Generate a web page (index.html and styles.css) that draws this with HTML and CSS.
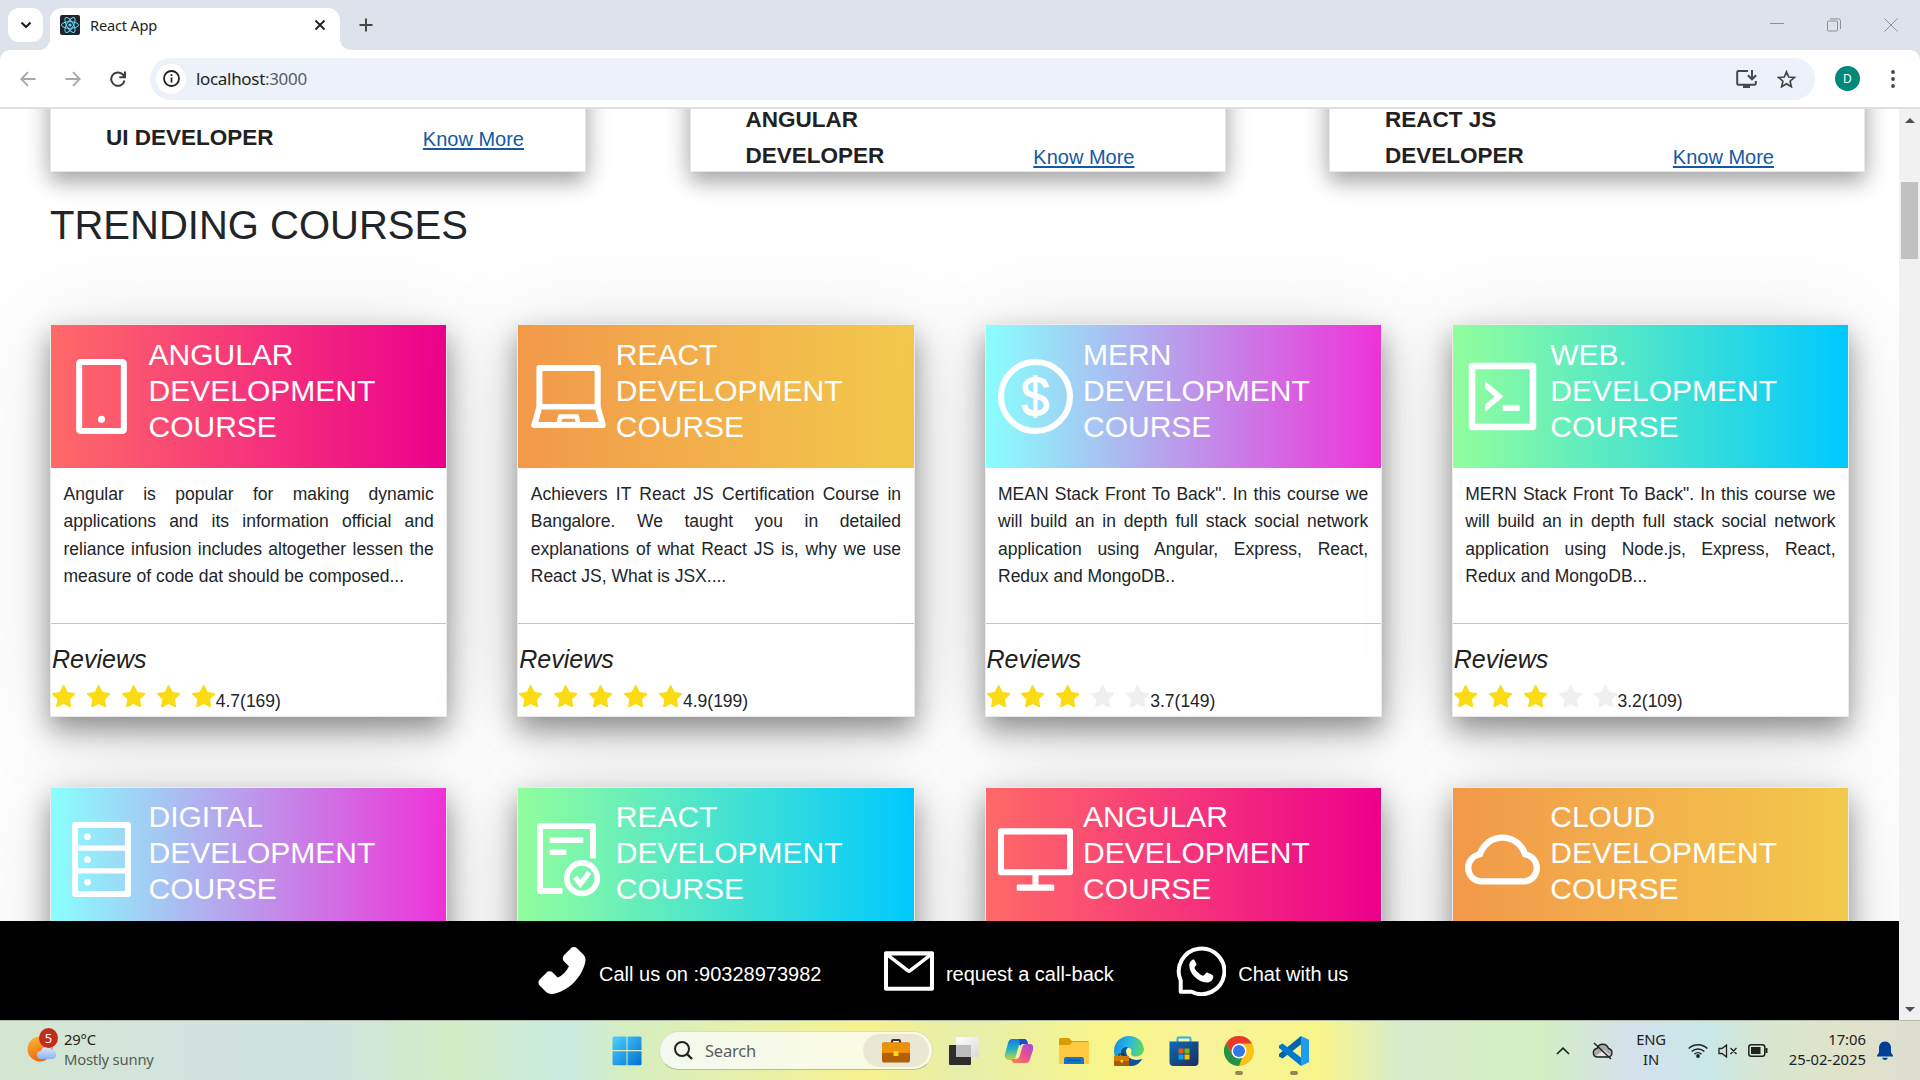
FILE: index.html
```
<!DOCTYPE html>
<html lang="en">
<head>
<meta charset="utf-8">
<title>React App</title>
<link rel="stylesheet" href="styles.css">
</head>
<body>
<svg class="defs" width="0" height="0" aria-hidden="true">
  <symbol id="star" viewBox="88 68 848 810"><path d="M908.1 353.1l-253.9-36.9L540.7 86.1c-3.1-6.3-8.2-11.4-14.5-14.5-15.8-7.8-35-1.3-42.9 14.5L369.8 316.2l-253.9 36.9c-7 1-13.4 4.3-18.3 9.3a32.05 32.05 0 00.6 45.3l183.7 179.1-43.4 252.9a31.95 31.95 0 0046.4 33.7L512 754l227.1 119.4c6.2 3.3 13.4 4.4 20.3 3.2 17.4-3 29.1-19.5 26.1-36.9l-43.4-252.9 183.7-179.1c5-4.9 8.3-11.3 9.3-18.3 2.7-17.5-9.5-33.7-27-36.3z"/></symbol>
</svg>

<header class="chrome">
  <div class="tabstrip">
    <button class="tab-search"><svg width="12" height="8" viewBox="0 0 12 8"><path d="M1.5 1.5L6 6l4.500-4.500" fill="none" stroke="#1f1f1f" stroke-width="2.200"/></svg></button>
    <div class="tab">
      <svg class="favicon" width="20" height="20" viewBox="0 0 20 20"><rect width="20" height="20" rx="2" fill="#20232a"/><g fill="none" stroke="#61dafb" stroke-width="1"><ellipse cx="10" cy="10" rx="8.500" ry="3.300"/><ellipse cx="10" cy="10" rx="8.500" ry="3.300" transform="rotate(60 10 10)"/><ellipse cx="10" cy="10" rx="8.500" ry="3.300" transform="rotate(120 10 10)"/></g><circle cx="10" cy="10" r="1.600" fill="#61dafb"/></svg>
      <span class="tab-title">React App</span>
      <svg class="tab-close" width="12" height="12" viewBox="0 0 12 12"><path d="M1.500 1.500l9 9M10.500 1.500l-9 9" stroke="#1f1f1f" stroke-width="1.800"/></svg>
    </div>
    <svg class="new-tab" width="14" height="14" viewBox="0 0 14 14"><path d="M7 .5v13M.5 7h13" stroke="#474747" stroke-width="2"/></svg>
    <div class="window-buttons">
      <svg width="14" height="14" viewBox="0 0 14 14"><path d="M0 5.500h14" stroke="#8d9096"/></svg>
      <svg width="14" height="14" viewBox="0 0 14 14"><g fill="none" stroke="#8d9096"><rect x=".5" y="3" width="10" height="10" rx="1"/><path d="M3 .9h8.500a2 2 0 012 2V11"/></g></svg>
      <svg width="14" height="14" viewBox="0 0 14 14"><path d="M.5.5l13 13M13.500.5l-13 13" stroke="#8d9096"/></svg>
    </div>
  </div>
  <div class="toolbar">
    <svg width="16" height="16" viewBox="0 0 16 16" fill="none" stroke="#a9a9a9" stroke-width="1.900"><path d="M15.500 8H1.500M8 1.200L1.300 8 8 14.800"/></svg>
    <svg width="16" height="16" viewBox="0 0 16 16" fill="none" stroke="#a9a9a9" stroke-width="1.900"><path d="M.5 8h14M8 1.200L14.700 8 8 14.800"/></svg>
    <svg width="16" height="16" viewBox="0 0 16 16" fill="none" stroke="#3c3c3c" stroke-width="2"><path d="M14.500 9.500A6.700 6.700 0 1112.600 3.300L14.800 5.500M15 .5v5.700H9.300"/></svg>
    <div class="omnibox">
      <span class="site-info"><svg width="17" height="17" viewBox="0 0 17 17"><circle cx="8.500" cy="8.500" r="7.500" fill="none" stroke="#1f1f1f" stroke-width="1.800"/><path d="M8.500 7.500v5M8.500 4.300v1.800" stroke="#1f1f1f" stroke-width="1.700"/></svg></span>
      <span class="url">localhost<span class="port">:3000</span></span>
      <svg width="21" height="18" viewBox="0 0 21 18" fill="none" stroke="#474747" stroke-width="2"><path d="M12 1H2.500Q1.200 1 1.200 2.300v11.200q0 1.300 1.300 1.300h16q1.300 0 1.300-1.300V11M16 0v9M11.800 5.300L16 9.300l4.200-4"/><path d="M7 16.500h7" stroke-width="3"/></svg>
      <svg width="19" height="18" viewBox="0 0 19 18"><path d="M9.500 1.800l2.200 5.200 5.700.5-4.300 3.700 1.300 5.600-4.900-3-4.900 3 1.300-5.600L1.600 7.500l5.700-.5z" fill="none" stroke="#474747" stroke-width="1.700"/></svg>
    </div>
    <span class="avatar">D</span>
    <svg width="4" height="18" viewBox="0 0 4 18" fill="#474747"><circle cx="2" cy="2" r="1.900"/><circle cx="2" cy="9" r="1.900"/><circle cx="2" cy="16" r="1.900"/></svg>
  </div>
</header>

<div class="viewport">
  <main class="page">
    <section class="careers">
      <article class="career"><h3>UI DEVELOPER</h3><a class="know-more" href="#">Know More</a></article>
      <article class="career"><h3>ANGULAR<br>DEVELOPER</h3><a class="know-more" href="#">Know More</a></article>
      <article class="career"><h3>REACT JS<br>DEVELOPER</h3><a class="know-more" href="#">Know More</a></article>
    </section>
    <h2 class="section-title">TRENDING COURSES</h2>
    <section class="courses">
      <article class="course">
        <div class="banner rose"><svg class="icon" viewBox="64 64 896 896"><rect x="245" y="100" width="534" height="824" rx="16" fill="none" stroke="#fff" stroke-width="72"/><circle cx="512" cy="785" r="42"/></svg><h3>ANGULAR DEVELOPMENT COURSE</h3></div>
        <p>Angular is popular for making dynamic applications and its information official and reliance infusion includes altogether lessen the measure of code dat should be composed...</p>
        <footer><h4>Reviews</h4><div class="rating"><svg><use href="#star"/></svg><svg><use href="#star"/></svg><svg><use href="#star"/></svg><svg><use href="#star"/></svg><svg><use href="#star"/></svg><span>4.7(169)</span></div></footer>
      </article>
      <article class="course">
        <div class="banner amber"><svg class="icon" viewBox="64 64 896 896"><path d="M956.9 845.1L896.4 632V168c0-17.700-14.300-32-32-32h-704c-17.700 0-32 14.300-32 32v464L67.900 845.100C60.400 866 75.800 888 98 888h828.800c22.200 0 37.600-22 30.100-42.900zM200.400 208h624v395h-624V208zm228.300 608l8.100-37h150.300l8.100 37H428.700zm224 0l-19.100-86.700c-.8-3.700-4.100-6.300-7.800-6.300H398.200c-3.800 0-7 2.600-7.800 6.300L371.300 816H151l42.300-149h638.200l42.300 149H652.700z"/></svg><h3>REACT DEVELOPMENT COURSE</h3></div>
        <p>Achievers IT React JS Certification Course in Bangalore. We taught you in detailed explanations of what React JS is, why we use React JS, What is JSX....</p>
        <footer><h4>Reviews</h4><div class="rating"><svg><use href="#star"/></svg><svg><use href="#star"/></svg><svg><use href="#star"/></svg><svg><use href="#star"/></svg><svg><use href="#star"/></svg><span>4.9(199)</span></div></footer>
      </article>
      <article class="course">
        <div class="banner violet"><svg class="icon" viewBox="64 64 896 896"><g fill="none" stroke="#fff"><circle cx="512" cy="512" r="412" stroke-width="72"/><path d="M640 402C633 345 590 310 512 310C436 310 388 350 388 405C388 470 445 490 512 506C590 523 644 550 644 613C644 680 588 713 512 713C430 713 386 674 380 612" stroke-width="66"/><path d="M512 255v512" stroke-width="50"/></g></svg><h3>MERN DEVELOPMENT COURSE</h3></div>
        <p>MEAN Stack Front To Back". In this course we will build an in depth full stack social network application using Angular, Express, React, Redux and MongoDB..</p>
        <footer><h4>Reviews</h4><div class="rating"><svg><use href="#star"/></svg><svg><use href="#star"/></svg><svg><use href="#star"/></svg><svg class="off"><use href="#star"/></svg><svg class="off"><use href="#star"/></svg><span>3.7(149)</span></div></footer>
      </article>
      <article class="course">
        <div class="banner mint"><svg class="icon" viewBox="64 64 896 896"><path d="M516 673c0 4.400 3.400 8 7.500 8h185c4.100 0 7.500-3.600 7.500-8v-48c0-4.400-3.400-8-7.500-8h-185c-4.100 0-7.500 3.600-7.500 8v48zm-194.900 6.100l192-161c3.800-3.200 3.800-9.100 0-12.300l-192-160.900A7.950 7.950 0 00308 351v62.700c0 2.400 1 4.600 2.900 6.100L420.700 512l-109.800 92.200a8.100 8.100 0 00-2.900 6.100V673c0 6.800 7.900 10.500 13.100 6.100zM880 112H144c-17.700 0-32 14.300-32 32v736c0 17.700 14.300 32 32 32h736c17.700 0 32-14.300 32-32V144c0-17.700-14.300-32-32-32zm-40 728H184V184h656v656z" stroke="#fff" stroke-width="6"/></svg><h3>WEB. DEVELOPMENT COURSE</h3></div>
        <p>MERN Stack Front To Back". In this course we will build an in depth full stack social network application using Node.js, Express, React, Redux and MongoDB...</p>
        <footer><h4>Reviews</h4><div class="rating"><svg><use href="#star"/></svg><svg><use href="#star"/></svg><svg><use href="#star"/></svg><svg class="off"><use href="#star"/></svg><svg class="off"><use href="#star"/></svg><span>3.2(109)</span></div></footer>
      </article>
      <article class="course">
        <div class="banner violet"><svg class="icon" viewBox="64 64 896 896"><path d="M832 64H192c-17.700 0-32 14.300-32 32v832c0 17.700 14.300 32 32 32h640c17.700 0 32-14.300 32-32V96c0-17.700-14.300-32-32-32zm-600 72h560v208H232V136zm560 480H232V408h560v208zm0 272H232V680h560v208zM304 240a40 40 0 1080 0 40 40 0 10-80 0zm0 272a40 40 0 1080 0 40 40 0 10-80 0zm0 272a40 40 0 1080 0 40 40 0 10-80 0z"/></svg><h3>DIGITAL DEVELOPMENT COURSE</h3></div>
      </article>
      <article class="course">
        <div class="banner mint"><svg class="icon" viewBox="64 64 896 896"><path d="M296 250c-4.400 0-8 3.600-8 8v48c0 4.400 3.600 8 8 8h384c4.400 0 8-3.600 8-8v-48c0-4.400-3.600-8-8-8H296zm184 144H296c-4.400 0-8 3.600-8 8v48c0 4.400 3.600 8 8 8h184c4.400 0 8-3.600 8-8v-48c0-4.400-3.600-8-8-8zm-48 458H208V148h560v344c0 4.400 3.600 8 8 8h56c4.400 0 8-3.600 8-8V108c0-17.700-14.300-32-32-32H168c-17.700 0-32 14.300-32 32v784c0 17.700 14.300 32 32 32h264c4.400 0 8-3.600 8-8v-56c0-4.400-3.600-8-8-8z"/><g fill="none" stroke="#fff"><circle cx="674" cy="735" r="182" stroke-width="68"/><path d="M592 722l62 82 106-140" stroke-width="62"/></g></svg><h3>REACT DEVELOPMENT COURSE</h3></div>
      </article>
      <article class="course">
        <div class="banner rose"><svg class="icon" viewBox="64 64 896 896"><path d="M928 140H96c-17.700 0-32 14.300-32 32v496c0 17.700 14.300 32 32 32h380v112H304c-8.800 0-16 7.200-16 16v48c0 4.400 3.600 8 8 8h432c4.400 0 8-3.600 8-8v-48c0-8.800-7.200-16-16-16H548V700h380c17.700 0 32-14.300 32-32V172c0-17.700-14.300-32-32-32zm-40 488H136V212h752v416z"/></svg><h3>ANGULAR DEVELOPMENT COURSE</h3></div>
      </article>
      <article class="course">
        <div class="banner amber"><svg class="icon" viewBox="64 64 896 896"><path d="M811.400 418.700C765.600 297.900 648.900 212 512.200 212S258.800 297.800 213 418.600C127.300 441.100 64 519.100 64 612c0 110.500 89.500 200 199.900 200h496.200C870.500 812 960 722.500 960 612c0-92.700-63.100-170.700-148.600-193.300zm36.300 281a123.070 123.070 0 01-87.600 36.300H263.900c-33.100 0-64.200-12.900-87.600-36.300A123.300 123.300 0 01140 612c0-28 9.100-54.300 26.200-76.300a125.700 125.700 0 0166.100-43.700l37.900-9.900 13.900-36.600c8.600-22.800 20.600-44.100 35.700-63.400a245.600 245.600 0 0152.400-49.900c41.100-28.900 89.500-44.200 140-44.200s98.900 15.300 140 44.200c19.900 14 37.500 30.800 52.400 49.900 15.100 19.300 27.100 40.700 35.700 63.400l13.800 36.500 37.800 10c54.300 14.500 92.100 63.800 92.100 120 0 33.100-12.900 64.300-36.300 87.700z"/></svg><h3>CLOUD DEVELOPMENT COURSE</h3></div>
      </article>
    </section>
    <div class="contact-bar">
      <div class="contact"><svg width="50" height="50" viewBox="74 82 876 876"><path d="M885.600 230.200L779.100 123.800a80.830 80.830 0 00-57.300-23.800c-21.700 0-42.100 8.500-57.400 23.800L549.800 238.400a80.830 80.830 0 00-23.800 57.300c0 21.700 8.500 42.100 23.800 57.400l83.800 83.800A393.820 393.820 0 01553.100 553 395.340 395.340 0 01437 633.800L353.200 550a80.830 80.830 0 00-57.300-23.800c-21.700 0-42.100 8.500-57.400 23.800L123.800 664.500a80.890 80.890 0 00-23.800 57.400c0 21.700 8.500 42.100 23.800 57.400l106.300 106.300c24.400 24.500 58.100 38.400 92.700 38.400 7.300 0 14.300-.6 21.200-1.800 134.800-22.200 268.500-93.900 376.400-201.700C828.200 612.800 899.800 479.200 922.300 344c6.800-41.300-6.900-83.800-36.700-113.800z"/></svg><span>Call us on :90328973982</span></div>
      <div class="contact"><svg width="50" height="50" viewBox="64 64 896 896"><path d="M928 160H96c-17.700 0-32 14.300-32 32v640c0 17.700 14.300 32 32 32h832c17.700 0 32-14.300 32-32V192c0-17.700-14.300-32-32-32zm-40 110.800V792H136V270.800l-27.600-21.500 39.300-50.500 42.800 33.300h643.100l42.800-33.300 39.300 50.500-27.700 21.500zM833.600 232L512 482 190.400 232l-42.800-33.300-39.300 50.500 27.600 21.500 341.600 265.600a55.990 55.990 0 0068.700 0L888 270.800l27.600-21.500-39.300-50.500-42.700 33.200z"/></svg><span>request a call-back</span></div>
      <div class="contact"><svg width="50" height="50" viewBox="0 0 50 50"><path d="M4.700 34.500A22.800 22.800 0 1115.500 45.800H4.700z" fill="none" stroke="#fff" stroke-width="4" stroke-linejoin="round"/><path d="M17.600 13.400c-1 0-4.300 1.700-4.300 6 0 8.500 9 16.600 17.300 17.100 3.500.2 6.600-2.300 6.700-5.800 0-1.200-.2-1.600-6-4.200-1.500-.6-2.600 2.600-3.900 3.200-1.500.4-8.600-5.300-8.900-8 .1-1.300 2.300-2.200 2-3.500l-2.100-4.200c-.3-.6-.4-.6-.8-.6z"/></svg><span>Chat with us</span></div>
    </div>
  </main>
  <div class="scrollbar"><i class="arrow up"></i><i class="thumb"></i><i class="arrow down"></i></div>
</div>

<div class="taskbar">
  <div class="weather">
    <div class="weather-icon"><svg width="30" height="34" viewBox="0 0 30 34"><defs><linearGradient id="sun" x2="0.300" y2="1"><stop stop-color="#fbb830"/><stop offset="1" stop-color="#ee6a17"/></linearGradient><linearGradient id="cl" x2="0" y2="1"><stop stop-color="#dce9ff"/><stop offset="1" stop-color="#8fb2ee"/></linearGradient></defs><circle cx="13" cy="16" r="12.500" fill="url(#sun)"/><path d="M14 26a4 4 0 010-8 6 6 0 0111-1 4.600 4.600 0 011 9z" fill="url(#cl)"/></svg><span class="badge">5</span></div>
    <div class="weather-text"><span>29°C</span><span class="dim">Mostly sunny</span></div>
  </div>
  <div class="apps">
    <svg width="30" height="30" viewBox="0 0 30 30"><defs><linearGradient id="win" x2="1" y2="1"><stop stop-color="#4fd0ff"/><stop offset="1" stop-color="#0070d0"/></linearGradient></defs><path d="M2 .5h12.500V14H.5V2A1.500 1.500 0 012 .5zM15.500.5H28A1.500 1.500 0 0129.500 2v12h-14zM.5 15.300h14v14H2a1.500 1.500 0 01-1.500-1.500zM15.500 15.300h14v12.500a1.500 1.500 0 01-1.500 1.500H15.500z" fill="url(#win)"/></svg>
    <div class="search"><svg width="19" height="19" viewBox="0 0 19 19"><circle cx="8" cy="8" r="7" fill="none" stroke="#222" stroke-width="2"/><path d="M13 13l5 5" stroke="#222" stroke-width="2.400"/></svg><span>Search</span><b class="search-art"><svg width="28" height="24" viewBox="0 0 28 24"><path d="M10 4V2q0-1 1-1h6q1 0 1 1v2" fill="none" stroke="#333" stroke-width="2"/><rect y="3.500" width="28" height="20" rx="2" fill="#b05f05"/><path d="M0 5.500a2 2 0 012-2h24a2 2 0 012 2V14H0z" fill="#ec9108"/><rect x="11.500" y="12" width="5" height="5" fill="#ffd21c"/></svg></b></div>
    <svg width="30" height="30" viewBox="0 0 30 30"><defs><linearGradient id="tv" x2="1" y2="1"><stop stop-color="#fff"/><stop offset="1" stop-color="#d9d9d9"/></linearGradient></defs><rect y="9" width="22" height="20" rx="1" fill="#2d2d2d"/><rect x="7" y="1" width="22.500" height="20" rx="1" fill="url(#tv)"/><path d="M7 9h15v12H7z" fill="#bcbcbc"/></svg>
    <svg width="30" height="30" viewBox="0 0 30 30"><defs><linearGradient id="cp1" x2="0" y2="1"><stop stop-color="#1679e0"/><stop offset=".5" stop-color="#27b2c3"/><stop offset="1" stop-color="#c8d838"/></linearGradient><linearGradient id="cp2" x1="1" x2="0" y2="1"><stop stop-color="#9a4be8"/><stop offset=".5" stop-color="#ec4f90"/><stop offset="1" stop-color="#fb8b4a"/></linearGradient></defs><path d="M8 3h12q3 0 4 5l-6 0q-3 0-4 4l-2 8q-1 4-4 4H5q-5 0-4-6L4 7q1-4 4-4z" fill="url(#cp1)"/><path d="M22 27H11q-3 0-4-4h5q3 0 4-4l2-7q1-4 4-4h4q4 0 3 6l-3 9q-1 4-4 4z" fill="url(#cp2)"/><path d="M15 3h5q3 0 4 5h-5q-2 0-3 2z" fill="#1a4fc4"/></svg>
    <svg width="30" height="30" viewBox="0 0 30 30"><path d="M0 3.500Q0 2 1.500 2H10l3 3h15.500Q30 5 30 6.500V12H0z" fill="#dc9b05"/><path d="M0 9h11l2.500-3H30v20.500q0 1.500-1.500 1.500h-27Q0 28 0 26.500z" fill="#ffca40"/><path d="M5 28v-5q0-2 2-2h16q2 0 2 2v5z" fill="#0d78cf"/><path d="M8.500 24.500h13" stroke="#07509a" stroke-width="1.400"/></svg>
    <svg width="30" height="30" viewBox="0 0 30 30"><defs><linearGradient id="ed" x2="1" y2=".3"><stop stop-color="#1187df"/><stop offset=".55" stop-color="#2bb9dc"/><stop offset="1" stop-color="#5dd961"/></linearGradient></defs><path d="M15 0C6 0 0 7 0 15c0 8 6 15 14 15 6 0 10-2 13-7-7 3-15-1-15-8 0-2 1-3 3-3 2 0 3 2 2 6 1 3 5 3 8 2 3-1 5-4 5-7C29 5 23 0 15 0z" fill="url(#ed)"/><path d="M7 16c0 8 5 14 11 14 4 0 8-3 10-7-8 3-16-1-16-8 0-2 1-3 2-4-4 0-7 2-7 5z" fill="#124f9d"/><rect y="20" width="15" height="10" rx="1" fill="#a85b08"/><path d="M0 20h15v5H0z" fill="#d37b0a"/><path d="M5 20v-2h5v2" fill="none" stroke="#412300"/><rect x="6.500" y="24" width="2.500" height="2.500" fill="#ffd21c"/></svg>
    <svg width="30" height="30" viewBox="0 0 30 30"><defs><linearGradient id="st" x2="1" y2="1"><stop stop-color="#096bb8"/><stop offset="1" stop-color="#1f2c5b"/></linearGradient></defs><path d="M8.500 6V2.500Q8.500 1.500 9.500 1.500h11q1 0 1 1V6" fill="none" stroke="#28b2ee" stroke-width="2"/><path d="M.5 5.500h29V26q0 4-4 4h-21q-4 0-4-4z" fill="url(#st)"/><path d="M9.500 12.500h5v5h-5z" fill="#f25022"/><path d="M15.500 12.500h5v5h-5z" fill="#7fba00"/><path d="M9.500 18.500h5v5h-5z" fill="#00a4ef"/><path d="M15.500 18.500h5v5h-5z" fill="#ffb900"/></svg>
    <span class="app running"><svg width="30" height="30" viewBox="0 0 30 30"><circle cx="15" cy="15" r="15" fill="#fbc116"/><path d="M2 7.500L8.500 18.700 15 22l3 0L15 30A15 15 0 012 7.500z" fill="#229342"/><path d="M15 7.500h13A15 15 0 002 7.500l6.500 11.200z" fill="#e33b2e"/><circle cx="15" cy="15" r="7.500" fill="#fff"/><circle cx="15" cy="15" r="6" fill="#2f78ea"/></svg></span>
    <span class="app running"><svg width="30" height="30" viewBox="0 0 30 30"><path d="M22 8.500L3.500 22.500 0 20.500V18L22 0z" fill="#0065a9"/><path d="M22 21.500L3.500 7.500 0 9.500V12L22 30z" fill="#007acc"/><path d="M22 0l8 3.700v22.600L22 30z" fill="#1f9cf0"/></svg></span>
  </div>
  <div class="tray">
    <svg class="t-up" width="14" height="8" viewBox="0 0 14 8"><path d="M1 7l6-5.800L13 7" fill="none" stroke="#222" stroke-width="1.600"/></svg>
    <svg class="t-cloud" width="21" height="18" viewBox="0 0 21 18"><path d="M5 15a4.300 4.300 0 010-8.500 6 6 0 0111.500 0A4.300 4.300 0 0116 15z" fill="#aaa" stroke="#222" stroke-width="1.400"/><path d="M4 14l8-6 6 5-2 1z" fill="#e6e6e6"/><path d="M2 1l17 16" stroke="#222" stroke-width="1.500"/></svg>
    <div class="t-lang"><span>ENG</span><span>IN</span></div>
    <svg class="t-wifi" width="20" height="15" viewBox="0 0 20 15"><g fill="none" stroke="#222" stroke-width="1.500"><path d="M.7 5.600a13 13 0 0118.600 0M3.700 8.500a9 9 0 0112.600 0M6.500 11.200a5 5 0 017 0"/></g><circle cx="10" cy="13" r="1.900" fill="#222"/></svg>
    <svg class="t-vol" width="20" height="14" viewBox="0 0 20 14" fill="none" stroke="#222" stroke-width="1.300"><path d="M1 4.500h3L8.500 1v12L4 9.500H1zM12.500 4l6 6M18.500 4l-6 6"/></svg>
    <svg class="t-bat" width="20" height="13" viewBox="0 0 20 13"><rect x=".8" y=".8" width="16" height="11.400" rx="2.500" fill="none" stroke="#222" stroke-width="1.500"/><rect x="3" y="3" width="9.500" height="7" fill="#222"/><path d="M18.500 4v5" stroke="#222" stroke-width="2"/></svg>
    <div class="t-clock"><span>17:06</span><span>25-02-2025</span></div>
    <svg class="t-bell" width="16" height="19" viewBox="0 0 16 19"><path d="M8 .5c4 0 6 3 6 6.500v4.500l2 3v1H0v-1l2-3V7C2 3.500 4 .5 8 .5zM5 16.700h6q-1 2.200-3 2.200t-3-2.200z" fill="#003f96"/></svg>
  </div>
</div>
</body>
</html>
```
FILE: styles.css
```
* { box-sizing: border-box; }
body {
  margin: 0;
  width: 1920px;
  height: 1080px;
  overflow: hidden;
  display: flex;
  flex-direction: column;
  background: #fff;
  color: #212529;
  font-family: "Liberation Sans", Arial, sans-serif;
}
h2, h3, h4, p { margin: 0; font-weight: 400; }
svg { flex: none; display: block; }
.defs { position: absolute; }

/* Browser chrome */
.chrome {
  position: relative;
  z-index: 2;
  flex: none;
  height: 109px;
  background: #dee2ea;
  font-family: "Noto Sans", "Open Sans", sans-serif;
}
.tabstrip { display: flex; align-items: center; height: 50px; padding: 0 22px 0 8px; }
.tab-search {
  display: flex; align-items: center; justify-content: center;
  width: 35px; height: 34px; padding: 0; border: 0; border-radius: 11px; background: #fff;
}
.tab {
  position: relative;
  display: flex; align-items: center;
  align-self: flex-end;
  width: 290px; height: 42px; margin-left: 7px; padding: 0 14px 8px 10px;
  background: #fff; border-radius: 12px 12px 0 0;
}
.tab::before, .tab::after {
  content: ""; position: absolute; bottom: 0; width: 12px; height: 12px;
}
.tab::before { left: -12px; background: radial-gradient(circle at 0 0, transparent 12px, #fff 12.500px); }
.tab::after { right: -12px; background: radial-gradient(circle at 100% 0, transparent 12px, #fff 12.500px); }
.tab-title { margin: 0 auto 0 10px; font-size: 14.600px; line-height: 20px; letter-spacing: -.2px; color: #1f1f1f; }
.new-tab { margin-left: 19px; }
.window-buttons { display: flex; gap: 43px; margin-left: auto; }
.toolbar {
  display: flex; align-items: center;
  height: 59px; padding: 0 26px 0 20px;
  background: #fff; border-bottom: 2px solid #dfdfdf; border-radius: 10px 10px 0 0;
}
.toolbar > svg:nth-child(2), .toolbar > svg:nth-child(3) { margin-left: 29px; }
.omnibox {
  display: flex; align-items: center;
  width: 1665px; height: 42px; margin-left: 24px; padding: 0 19px 0 6px;
  background: #ecf1fa; border-radius: 21px;
}
.omnibox > svg:last-child { margin-left: 20px; }
.site-info { display: flex; align-items: center; justify-content: center; width: 30px; height: 30px; border-radius: 50%; background: #fff; }
.url { margin: 0 auto 0 10px; font-size: 17px; letter-spacing: -.32px; color: #1f1f1f; }
.port { color: #5a5d61; }
.omnibox, .avatar { flex: none; }
.avatar {
  display: flex; align-items: center; justify-content: center;
  width: 25px; height: 25px; margin: 0 31px 0 20px;
  border-radius: 50%; background: #00897b; color: #fff; font-size: 12px;
}

/* Web page */
.viewport { display: flex; height: 911px; overflow: hidden; }
.page { position: relative; width: 1899px; height: 911px; padding: 0 50px; overflow: hidden; }
.careers { display: flex; gap: 103.500px; margin-top: -50px; margin-right: -20px; }
.career {
  display: flex; align-items: center; justify-content: space-between;
  flex: none;
  width: 536px; height: 113px; padding: 45px 90px 0 55px;
  background: #fff; border: 1px solid #e9e9e9;
  box-shadow: 0 10px 20px rgba(0,0,0,.3), 0 3px 28px rgba(0,0,0,.1);
}
.career:first-child { padding-right: 61px; }
.career h3 { font-size: 22.500px; font-weight: 700; line-height: 36px; color: #212121; }
.know-more {
  align-self: center; font-size: 20px; line-height: 36px; color: #1559a3;
  text-decoration-thickness: 2px; text-underline-offset: 2px;
  margin-top: 38px;
}
.career:first-child .know-more { margin-top: 1px; }
.section-title { margin: 29px 0 75px; font-size: 40px; line-height: 48px; }
.courses { display: grid; grid-template-columns: repeat(4, 1fr); gap: 70px; }
.course {
  height: 393px;
  border: 1px solid #ebebeb; background: #fff;
  box-shadow: 0 13px 26px rgba(0,0,0,.4), 0 6px 90px rgba(0,0,0,.13);
}
.banner { display: flex; align-items: flex-start; gap: 10px; height: 143px; padding: 12px 60px 0 12.500px; color: #fff; }
.banner .icon { width: 75px; height: 75px; margin-top: 22px; fill: #fff; }
.banner h3 { font-size: 30px; line-height: 36px; }
.course:nth-child(n+5) h3 { margin-top: -1px; }
.rose { background: linear-gradient(90deg, #ff6a68, #ec008c); }
.amber { background: linear-gradient(90deg, #f2994a, #f2c94c); }
.violet { background: linear-gradient(90deg, #89fffd, #ef32d9); }
.mint { background: linear-gradient(90deg, #92fe9d, #00c9ff); }
.course p { height: 155px; padding: 13px 12.500px 0; font-size: 17.500px; line-height: 27.350px; text-align: justify; }
.course footer { border-top: 1px solid #c4c4c4; padding: 20px 0 0 1px; }
.course h4 { font-size: 25px; font-style: italic; line-height: 30px; color: #212121; }
.rating { display: flex; align-items: flex-start; gap: 11.700px; margin-top: 11px; }
.rating svg { width: 23.300px; height: 22.400px; fill: #fadb14; }
.rating svg.off { fill: #efefef; }
.rating span { margin: 3px 0 0 -11.200px; font-size: 17.500px; line-height: 26px; }
.contact-bar {
  position: absolute; left: 0; right: 0; bottom: 0;
  display: flex; gap: 62.500px;
  height: 99px; padding: 25px 0 0 537px;
  background: #000; color: #fff; font-size: 20px;
}
.contact { display: flex; gap: 12px; }
.contact svg { fill: #fff; }
.contact span { line-height: 30px; margin-top: 13px; }
.scrollbar {
  display: flex; flex-direction: column; align-items: center;
  width: 21px; padding: 9px 0 8px; background: #f1f1f1;
}
.arrow { border: 5px solid transparent; }
.up { border-top: 0; border-bottom-color: #505050; }
.down { border-bottom: 0; border-top-color: #505050; margin-top: auto; }
.thumb { width: 17px; height: 77px; margin-top: 59px; background: #c1c1c1; }

/* Taskbar */
.taskbar {
  display: flex; align-items: center;
  height: 60px; border-top: 1px solid #b3bda9;
  font-family: "Noto Sans", "Open Sans", sans-serif; font-size: 14.800px; line-height: 20px; color: #222;
  background: linear-gradient(90deg, #d4e7cf 0, #d2e3de 170px, #cfe2e0 330px, #d3edc5 450px, #c9ebe2 568px, #d5eec0 625px, #e9f1a8 760px, #f6f18d 870px, #e6eeac 965px, #f8f68a 1110px, #f8f39a 1200px, #f7f58b 1320px, #d8ebcc 1400px, #d2efc2 1540px, #d5e0ec 1630px, #c8e8e8 1705px, #d9e6cf 1770px, #e0e3c8 1850px, #ddddd2 1920px);
}
.weather { display: flex; gap: 7px; width: 612px; padding-left: 27px; }
.weather-icon { position: relative; width: 30px; height: 34px; margin-top: 1px; }
.badge {
  position: absolute; left: 12px; top: -5px; width: 19px; height: 20px; border-radius: 50%;
  background: #c42b1c; color: #fff; font-size: 13px; text-align: center;
}
.weather-text, .t-lang, .t-clock { display: flex; flex-direction: column; letter-spacing: -.2px; margin-top: -3px; }
.dim { color: #555b52; }
.apps { display: flex; align-items: center; width: 944px; gap: 25px; }
.search {
  display: flex; align-items: center;
  width: 274px; height: 39px; margin: 0 -9px 0 -8px; padding: 0 3px 0 14px;
  border-radius: 20px; border: 1px solid #d9dfc0; border-bottom-color: #b7bc92;
  background: linear-gradient(90deg, #f3f9ee, #fcfbe0);
  font-size: 16.500px; color: #5d5d5d;
}
.search > span { margin: 0 auto 0 12px; letter-spacing: -.2px; }
.search-art { display: flex; align-items: center; justify-content: center; width: 66px; height: 33px; border-radius: 17px; background: #eae8d2; }
.app { position: relative; }
.running::after { content: ""; position: absolute; left: 11px; top: 35px; width: 8px; height: 4px; border-radius: 2px; background: #8b8955; }
.tray { display: flex; align-items: center; }
.t-cloud { margin-left: 22px; }
.t-lang { width: 60px; margin-left: 8px; text-align: center; }
.t-wifi { margin-left: 7px; }
.t-vol { margin-left: 10px; }
.t-bat { margin-left: 10px; }
.t-clock { width: 98px; text-align: right; letter-spacing: 0; }
.t-bell { margin-left: 11px; }
```
